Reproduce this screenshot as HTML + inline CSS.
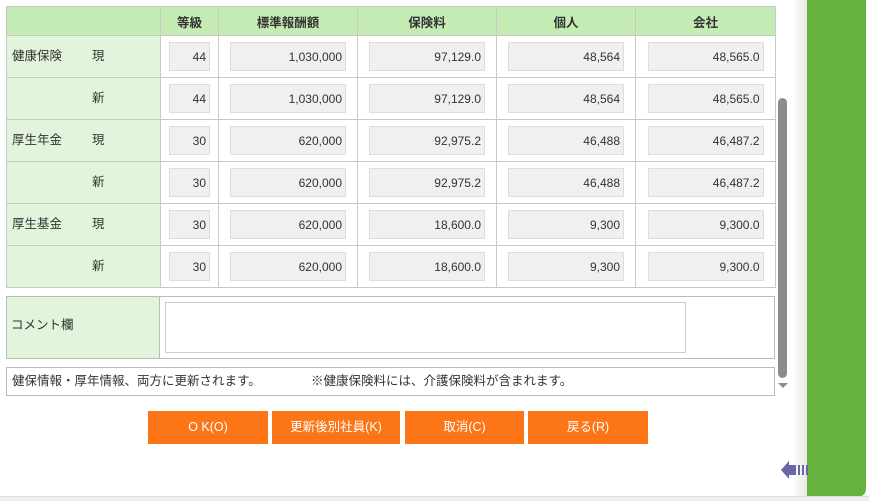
<!DOCTYPE html>
<html><head><meta charset="utf-8"><style>
body{margin:0;width:869px;height:500px;background:#fff;position:relative;overflow:hidden;font-family:"Liberation Sans","Noto Sans CJK JP",sans-serif;font-size:12px;color:#333}
table{position:absolute;left:6px;top:6px;border-collapse:collapse;table-layout:fixed;width:769px}
td,th{border:1px solid #c8c8c8;padding:0}
th{background:#c6ecb5;height:28px;font-size:12.5px;font-weight:bold;color:#333}
td{height:41px}
td.l{background:#e2f5dc;font-size:12.5px;padding-left:5px}
td.l div{position:relative;top:-2px}
td.l span{display:inline-block;width:80px}
.i{margin:0 auto;height:29px;background:#f0f0f0;border:1px solid #ddd;box-sizing:border-box;text-align:right;line-height:28px;padding-right:3px;font-size:12px}
.g{width:41px}.w{width:116px}
.box{position:absolute;border:1px solid #bbb;box-sizing:border-box}
.btn{position:absolute;top:411px;height:33px;background:#fc7618;color:#fff;text-align:center;line-height:33px;font-size:12.5px}
</style></head><body>
<table>
<colgroup><col style="width:154px"><col style="width:58px"><col style="width:139px"><col style="width:139px"><col style="width:139px"><col style="width:140px"></colgroup>
<tr><th></th><th>等級</th><th>標準報酬額</th><th>保険料</th><th>個人</th><th>会社</th></tr>
<tr><td class="l"><div><span>健康保険</span>現</div></td><td><div class="i g">44</div></td><td><div class="i w">1,030,000</div></td><td><div class="i w">97,129.0</div></td><td><div class="i w">48,564</div></td><td><div class="i w">48,565.0</div></td></tr>
<tr><td class="l"><div><span></span>新</div></td><td><div class="i g">44</div></td><td><div class="i w">1,030,000</div></td><td><div class="i w">97,129.0</div></td><td><div class="i w">48,564</div></td><td><div class="i w">48,565.0</div></td></tr>
<tr><td class="l"><div><span>厚生年金</span>現</div></td><td><div class="i g">30</div></td><td><div class="i w">620,000</div></td><td><div class="i w">92,975.2</div></td><td><div class="i w">46,488</div></td><td><div class="i w">46,487.2</div></td></tr>
<tr><td class="l"><div><span></span>新</div></td><td><div class="i g">30</div></td><td><div class="i w">620,000</div></td><td><div class="i w">92,975.2</div></td><td><div class="i w">46,488</div></td><td><div class="i w">46,487.2</div></td></tr>
<tr><td class="l"><div><span>厚生基金</span>現</div></td><td><div class="i g">30</div></td><td><div class="i w">620,000</div></td><td><div class="i w">18,600.0</div></td><td><div class="i w">9,300</div></td><td><div class="i w">9,300.0</div></td></tr>
<tr><td class="l"><div><span></span>新</div></td><td><div class="i g">30</div></td><td><div class="i w">620,000</div></td><td><div class="i w">18,600.0</div></td><td><div class="i w">9,300</div></td><td><div class="i w">9,300.0</div></td></tr>
</table>
<div class="box" style="left:6px;top:296px;width:769px;height:63px"></div>
<div style="position:absolute;left:7px;top:297px;width:153px;height:61px;background:#e2f5dc;border-right:1px solid #bbb;line-height:56px;padding-left:4px;box-sizing:border-box;font-size:12.5px">コメント欄</div>
<div style="position:absolute;left:165px;top:302px;width:521px;height:51px;border:1px solid #ccc;box-sizing:border-box"></div>
<div class="box" style="left:6px;top:367px;width:769px;height:29px;line-height:26px;padding-left:5px;font-size:12.5px">健保情報・厚年情報、両方に更新されます。<span style="position:absolute;left:304px">※健康保険料には、介護保険料が含まれます。</span></div>
<div class="btn" style="left:148px;width:120px">O K(O)</div>
<div class="btn" style="left:272px;width:128px">更新後別社員(K)</div>
<div class="btn" style="left:405px;width:119px">取消(C)</div>
<div class="btn" style="left:528px;width:120px">戻る(R)</div>
<div style="position:absolute;left:778px;top:98px;width:9px;height:280px;background:#8c8c8c;border-radius:5px"></div>
<div style="position:absolute;left:778px;top:383px;width:0;height:0;border-left:5px solid transparent;border-right:5px solid transparent;border-top:5px solid #8c8c8c"></div>
<div style="position:absolute;left:793px;top:0;width:14px;height:497px;background:linear-gradient(to right,#fff,#e8e8e8)"></div>
<div style="position:absolute;left:807px;top:0;width:59px;height:497px;background:#65b33d;border-radius:0 0 8px 0"></div>
<div style="position:absolute;left:0;top:496px;width:869px;height:4px;background:#f0f0f0;border-top:1px solid #ddd"></div>
<svg style="position:absolute;left:780px;top:458px" width="28" height="24"><path d="M1 12 L9 3 V7 H16 V17 H9 V21 Z" fill="#6c64a8"/><rect x="18" y="7" width="2" height="10" fill="#6c64a8"/><rect x="22" y="7" width="2" height="10" fill="#6c64a8"/><rect x="26" y="7" width="2" height="10" fill="#6c64a8"/></svg>
</body></html>
